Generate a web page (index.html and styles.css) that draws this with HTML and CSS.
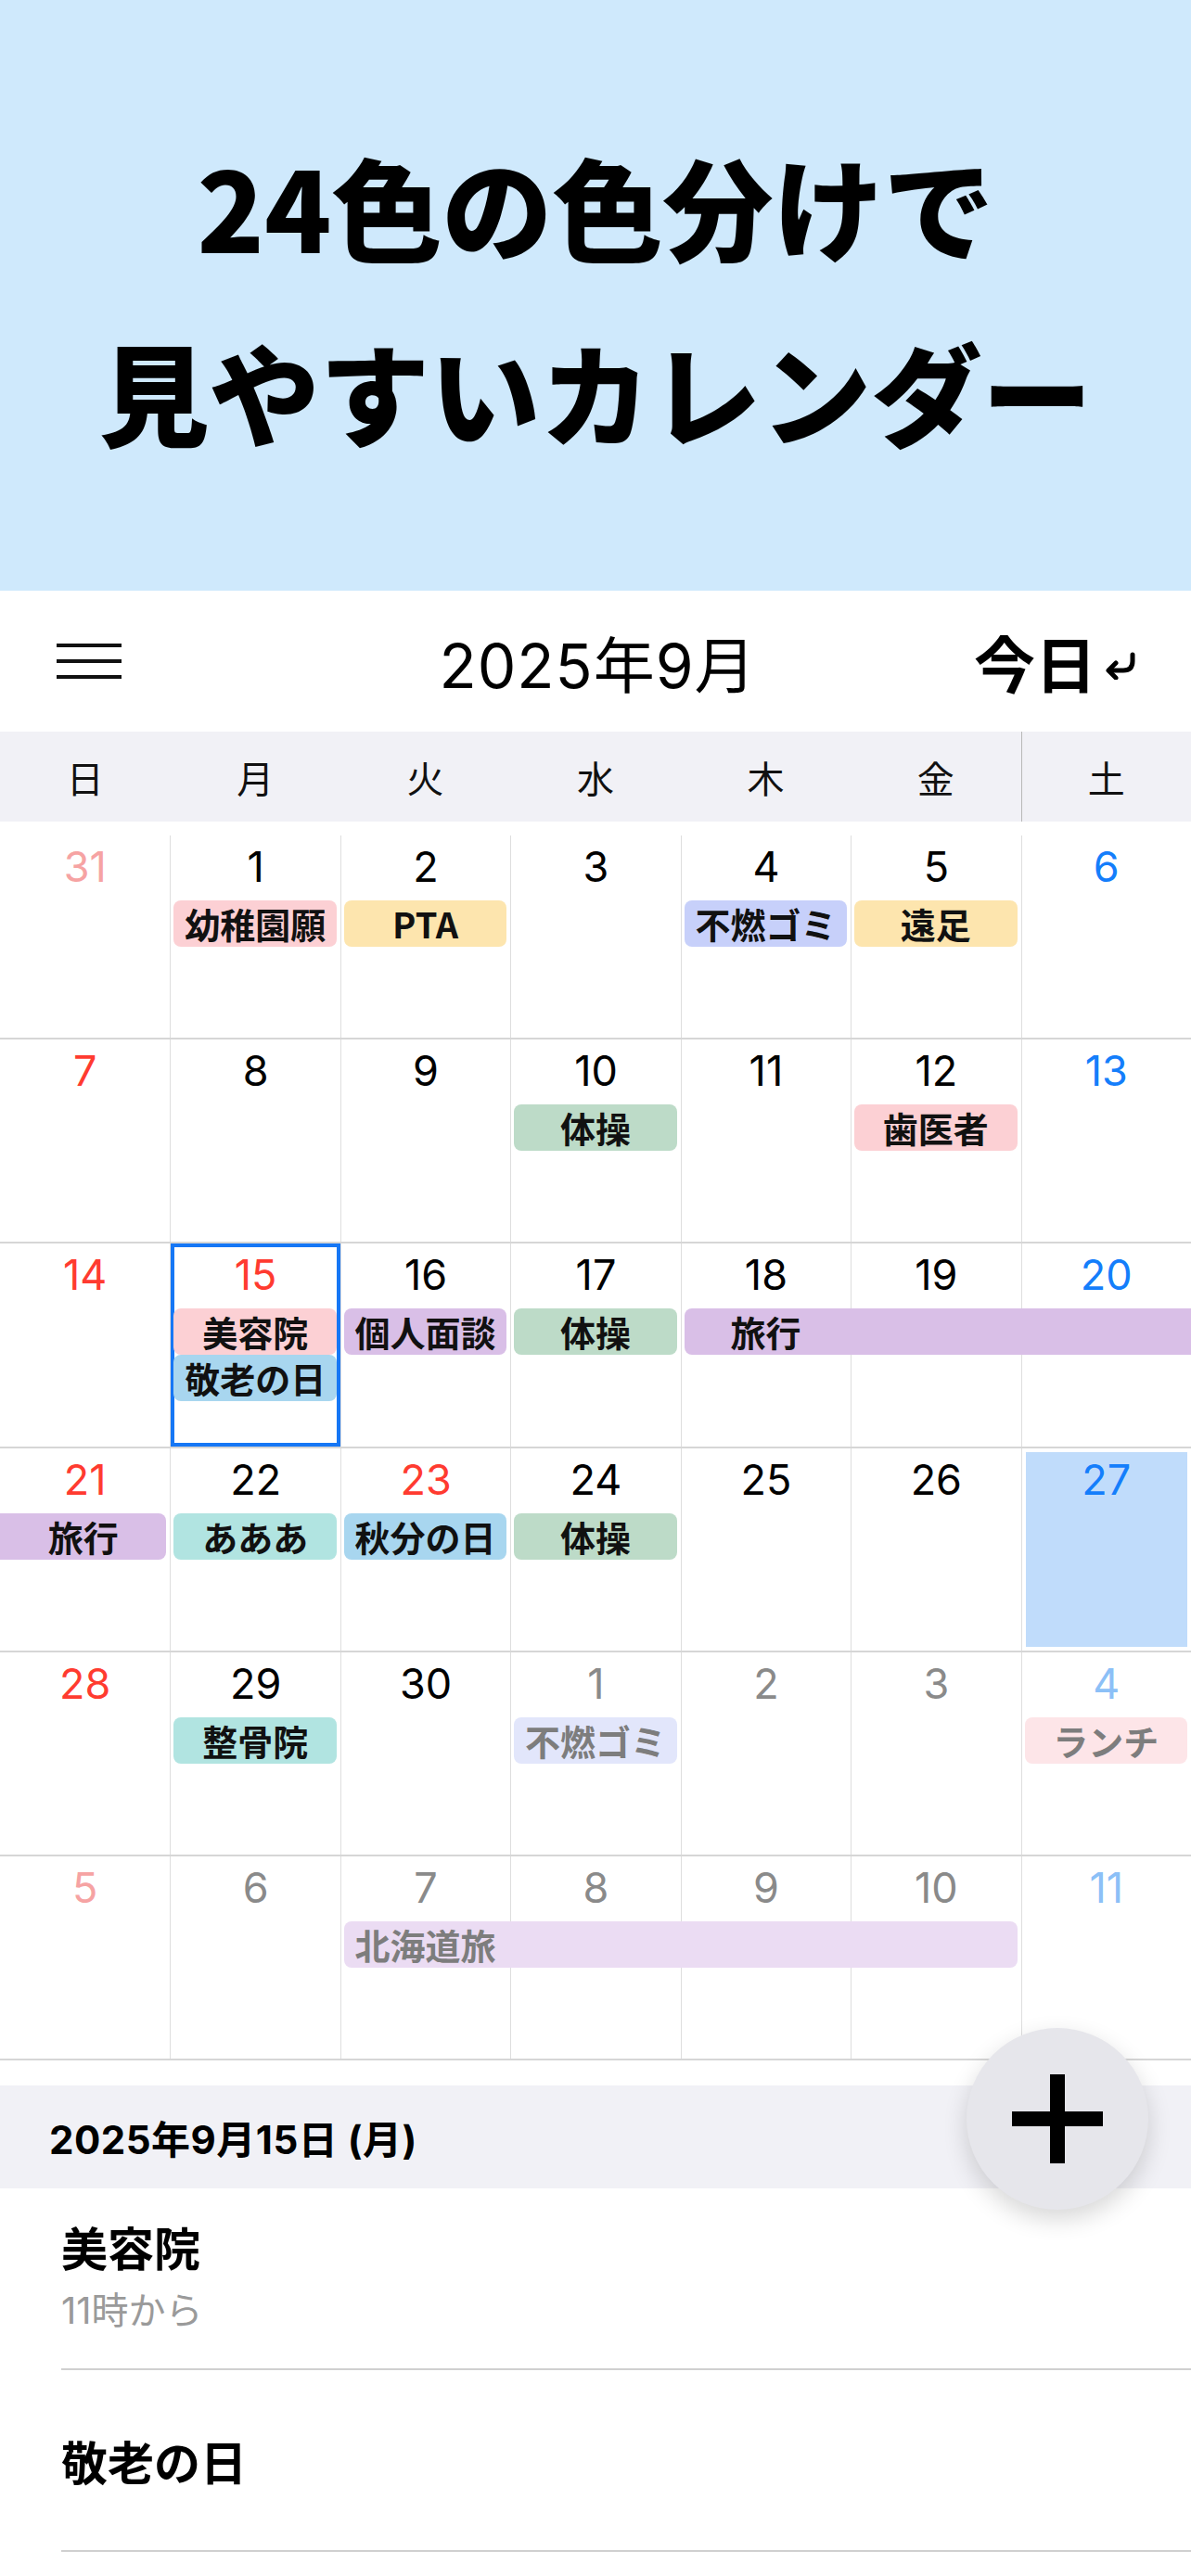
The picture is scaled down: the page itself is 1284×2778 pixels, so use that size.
FILE: index.html
```html
<!DOCTYPE html>
<html lang="ja">
<head>
  <meta charset="UTF-8" />
  <meta name="viewport" content="width=device-width, initial-scale=1.0" />
  <title>カレンダー</title>
  <link rel="stylesheet" href="styles.css">
</head>
<body>
  <header class="hero">
    <h1>24色の色分けで<br>見やすいカレンダー</h1>
  </header>

  <nav class="topbar">
    <button class="menu" aria-label="メニュー">
      <svg width="70" height="38" viewBox="0 0 70 38">
        <path d="M0 2H70M0 19H70M0 36H70" stroke="#111" stroke-width="4" />
      </svg>
    </button>
    <div class="month">2025年9月</div>
    <div class="today">今日<svg class="ret" width="40" height="30" viewBox="0 0 40 30">
        <path d="M33 3V10Q33 20 23 20H8" fill="none" stroke="#000" stroke-width="5" stroke-linecap="round" />
        <path d="M15 12L7 20L15 28" fill="none" stroke="#000" stroke-width="5" stroke-linecap="round" stroke-linejoin="round" />
      </svg></div>
  </nav>

  <div class="weekdays">
    <span>日</span><span>月</span><span>火</span><span>水</span><span>木</span><span>金</span><span class="sat-col">土</span>
  </div>

  <main class="calendar">
    <!-- week 1 -->
    <section class="week">
      <div class="day sun-dim">31</div>
      <div class="day">1</div>
      <div class="day">2</div>
      <div class="day">3</div>
      <div class="day">4</div>
      <div class="day">5</div>
      <div class="day sat">6</div>
      <div class="ev pink col-2 r1">幼稚園願</div>
      <div class="ev yellow col-3 r1">PTA</div>
      <div class="ev lavender col-5 r1">不燃ゴミ</div>
      <div class="ev yellow col-6 r1">遠足</div>
    </section>
    <!-- week 2 -->
    <section class="week">
      <div class="day sun">7</div>
      <div class="day">8</div>
      <div class="day">9</div>
      <div class="day">10</div>
      <div class="day">11</div>
      <div class="day">12</div>
      <div class="day sat">13</div>
      <div class="ev green col-4 r1">体操</div>
      <div class="ev pink col-6 r1">歯医者</div>
    </section>
    <!-- week 3 -->
    <section class="week">
      <div class="day sun">14</div>
      <div class="day sun selected">15</div>
      <div class="day">16</div>
      <div class="day">17</div>
      <div class="day">18</div>
      <div class="day">19</div>
      <div class="day sat">20</div>
      <div class="ev pink col-2 r1">美容院</div>
      <div class="ev sky col-2 r2">敬老の日</div>
      <div class="ev purple col-3 r1">個人面談</div>
      <div class="ev green col-4 r1">体操</div>
      <div class="ev purple col-5 span-3 r1 multi open-r"><span>旅行</span></div>
    </section>
    <!-- week 4 -->
    <section class="week">
      <div class="day sun">21</div>
      <div class="day">22</div>
      <div class="day sun">23</div>
      <div class="day">24</div>
      <div class="day">25</div>
      <div class="day">26</div>
      <div class="day sat today-cell">27</div>
      <div class="ev purple col-1 r1 open-l">旅行</div>
      <div class="ev teal col-2 r1">あああ</div>
      <div class="ev sky col-3 r1">秋分の日</div>
      <div class="ev green col-4 r1">体操</div>
    </section>
    <!-- week 5 -->
    <section class="week">
      <div class="day sun">28</div>
      <div class="day">29</div>
      <div class="day">30</div>
      <div class="day dim">1</div>
      <div class="day dim">2</div>
      <div class="day dim">3</div>
      <div class="day sat-dim">4</div>
      <div class="ev teal col-2 r1">整骨院</div>
      <div class="ev lavender-f faded col-4 r1">不燃ゴミ</div>
      <div class="ev pink-f faded col-7 r1">ランチ</div>
    </section>
    <!-- week 6 -->
    <section class="week">
      <div class="day sun-dim">5</div>
      <div class="day dim">6</div>
      <div class="day dim">7</div>
      <div class="day dim">8</div>
      <div class="day dim">9</div>
      <div class="day dim">10</div>
      <div class="day sat-dim">11</div>
      <div class="ev purple-f faded col-3 span-4 r1 multi"><span>北海道旅</span></div>
    </section>
  </main>

  <div class="date-bar">2025年9月15日 (月)</div>

  <ul class="agenda">
    <li>
      <div class="title">美容院</div>
      <div class="sub">11時から</div>
    </li>
    <li>
      <div class="title">敬老の日</div>
    </li>
  </ul>

  <button class="fab" aria-label="追加"><span></span></button>
</body>
</html>
```

FILE: styles.css
```css
/* Variables */
:root {
  --font: 'Inter', 'Noto Sans CJK JP', sans-serif;
  --jp: 'Noto Sans CJK JP', sans-serif;
  --sun: #ff3b30;
  --sat: #147efb;
  --sun-dim: #f6a3a3;
  --sat-dim: #8cc0f7;
  --dim: #8a8a8a;
  --line: #dedede;
  --bar: #f1f1f6;
}
body {
  margin: 0;
  width: 1284px;
  font-family: var(--font);
  color: #000;
  background: #fff;
  position: relative;
}
/* Hero */
.hero {
  height: 637px;
  background: #cfe9fc;
  box-sizing: border-box;
  padding-top: 121px;
}
.hero h1 {
  margin: 0;
  font-family: var(--jp);
  font-size: 119px;
  font-weight: 900;
  line-height: 200px;
  text-align: center;
}
/* Top bar */
.topbar {
  height: 152px;
  display: grid;
  grid-template-columns: 1fr auto 1fr;
  align-items: center;
  padding: 0 56px 0 61px;
}
.menu {
  justify-self: start;
  background: none;
  border: none;
  padding: 0;
  display: flex;
}
.month {
  font-size: 66px;
  font-weight: 400;
  letter-spacing: 1px;
}
.today {
  justify-self: end;
  display: flex;
  align-items: center;
  font-family: var(--jp);
  font-size: 66px;
  font-weight: 700;
}
.today .ret {
  margin: 10px 0 0 6px;
}
/* Weekday header */
.weekdays {
  height: 97px;
  background: var(--bar);
  display: grid;
  grid-template-columns: repeat(7, 1fr);
  margin-bottom: 15px;
}
.weekdays span {
  display: flex;
  align-items: center;
  justify-content: center;
  font-family: var(--jp);
  font-size: 40px;
  font-weight: 400;
  color: #111;
}
.weekdays .sat-col {
  border-left: 1px solid #b8b8b8;
}
/* Month grid */
.week {
  height: 220.2px;
  box-sizing: border-box;
  border-bottom: 2px solid #d6d6d6;
  display: grid;
  grid-template-columns: repeat(7, 1fr);
  grid-template-rows: 70px 50px 50px 1fr;
}
.day {
  grid-row: 1 / -1;
  text-align: center;
  font-size: 45px;
  line-height: 54px;
  padding-top: 7px;
}
.day + .day {
  border-left: 1px solid var(--line);
}
.day:nth-child(1) { grid-column: 1; }
.day:nth-child(2) { grid-column: 2; }
.day:nth-child(3) { grid-column: 3; }
.day:nth-child(4) { grid-column: 4; }
.day:nth-child(5) { grid-column: 5; }
.day:nth-child(6) { grid-column: 6; }
.day:nth-child(7) { grid-column: 7; }
.sun { color: var(--sun); }
.sat { color: var(--sat); }
.sun-dim { color: var(--sun-dim); }
.sat-dim { color: var(--sat-dim); }
.dim { color: var(--dim); }
.selected {
  box-shadow: inset 0 0 0 4px #1677f5;
}
.today-cell {
  background: #c0dcfb;
  box-shadow: inset 0 0 0 4px #fff;
}
/* Events */
.ev {
  margin: 0 4px;
  border-radius: 8px;
  font-family: var(--jp);
  font-size: 38px;
  font-weight: 700;
  line-height: 50px;
  text-align: center;
  white-space: nowrap;
  color: #111;
}
.ev.multi {
  text-align: left;
}
.ev.multi span {
  display: inline-block;
  width: 175.4px;
  text-align: center;
}
.open-r {
  margin-right: 0;
  border-top-right-radius: 0;
  border-bottom-right-radius: 0;
}
.open-l {
  margin-left: 0;
  border-top-left-radius: 0;
  border-bottom-left-radius: 0;
}
.r1 { grid-row: 2; }
.r2 { grid-row: 3; }
.col-1 { grid-column-start: 1; }
.col-2 { grid-column-start: 2; }
.col-3 { grid-column-start: 3; }
.col-4 { grid-column-start: 4; }
.col-5 { grid-column-start: 5; }
.col-6 { grid-column-start: 6; }
.col-7 { grid-column-start: 7; }
.span-3 { grid-column-end: span 3; }
.span-4 { grid-column-end: span 4; }
.pink { background: #fcd0d4; }
.yellow { background: #fde5ae; }
.lavender { background: #c7d0fa; }
.green { background: #bddbc8; }
.purple { background: #d9bfe7; }
.teal { background: #b1e4e1; }
.sky { background: #a8d6ef; }
.lavender-f { background: #e2e6fb; }
.pink-f { background: #fde5e8; }
.purple-f { background: #ebdcf3; }
.faded { color: #7d7d7d; }
/* Selected date */
.date-bar {
  margin-top: 27px;
  height: 111px;
  background: var(--bar);
  display: flex;
  align-items: center;
  padding-left: 53px;
  font-size: 42px;
  font-weight: 700;
  letter-spacing: 0.5px;
}
.agenda {
  list-style: none;
  margin: 0;
  padding: 0;
}
.agenda li {
  height: 196px;
  box-sizing: border-box;
  margin-left: 66px;
  border-bottom: 2px solid #d0d0d0;
  display: flex;
  flex-direction: column;
  justify-content: center;
  gap: 10px;
}
.agenda .title {
  font-family: var(--jp);
  font-size: 50px;
  font-weight: 700;
  line-height: 60px;
}
.agenda .sub {
  font-size: 40px;
  line-height: 60px;
  color: #9a9a9a;
}
/* Add button */
.fab {
  position: absolute;
  top: 2187px;
  left: 1042px;
  width: 196px;
  height: 196px;
  border-radius: 50%;
  border: none;
  background: #e6e6eb;
  box-shadow: 0 10px 26px rgba(0,0,0,0.16);
  padding: 0;
}
.fab span {
  position: absolute;
  left: 49px;
  top: 50px;
  width: 98px;
  height: 96px;
}
.fab span::before,
.fab span::after {
  content: '';
  position: absolute;
  background: #000;
}
.fab span::before {
  left: 0; right: 0; top: 40px; height: 16px;
}
.fab span::after {
  top: 0; bottom: 0; left: 41px; width: 16px;
}
```
